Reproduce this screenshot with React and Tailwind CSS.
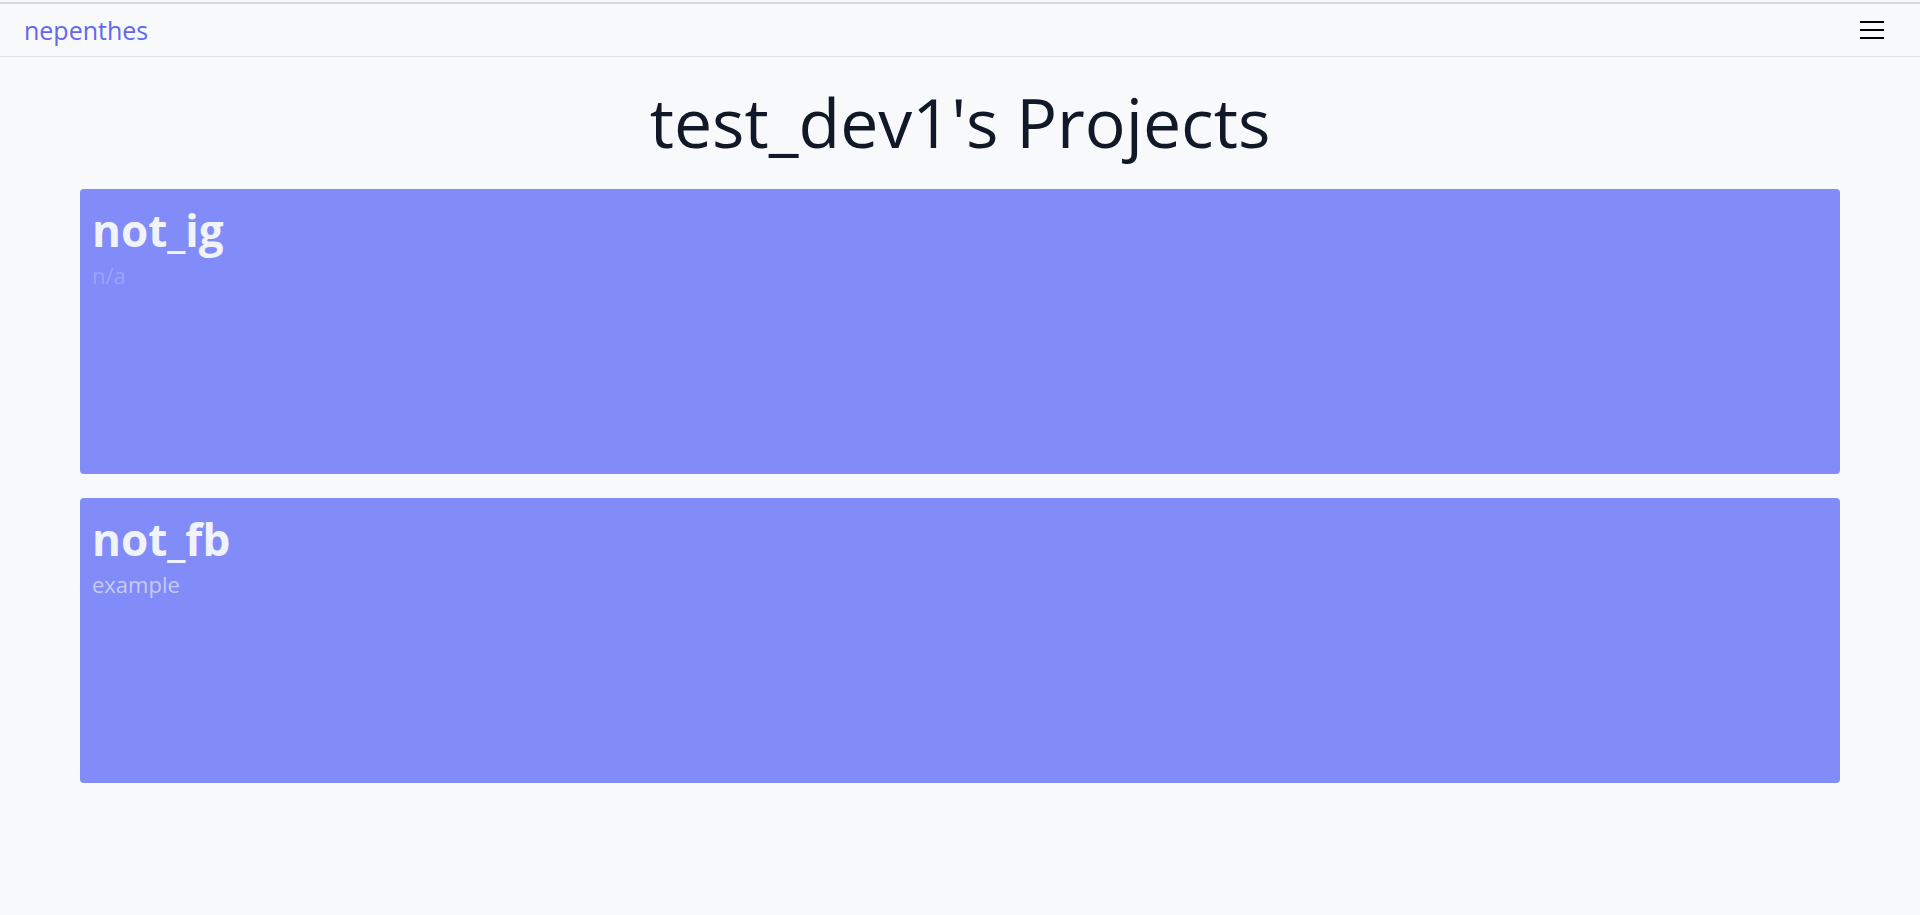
const projects = [
    { name: 'not_ig', description: 'n/a', faded: true },
    { name: 'not_fb', description: 'example', faded: false },
];

const App = () => {
    return (
        <div className="min-h-screen bg-[#f8f9fb] pt-[2px] font-['Open_Sans',sans-serif]">
            <nav className="flex h-[55px] items-center justify-between border-t-2 border-b border-t-[#d9d9dc] border-b-[#e3e4e8] px-6">
                <a href="#" className="text-[25px] leading-none text-[#6366f1]">nepenthes</a>
                <button className="flex h-6 w-6 items-center justify-center text-black mr-[12px]">
                    <svg width="24" height="18" viewBox="0 0 24 18" fill="none" stroke="currentColor" strokeWidth="1.3" shapeRendering="crispEdges">
                        <path d="M0 1h24M0 9h24M0 17h24" />
                    </svg>
                </button>
            </nav>

            <main className="mx-auto w-11/12">
                <h1 className="pt-[21px] pb-[23px] text-center text-[68px] leading-[88px] text-[#111827]">
                    test_dev1's Projects
                </h1>

                <div className="flex flex-col gap-6">
                    {projects.map((project) => (
                        <div key={project.name} className="h-[285px] rounded bg-[#818cf8] px-3 pt-[15px]">
                            <h2 className="text-[44px] font-bold leading-[52px] text-[#f1f3fb]">{project.name}</h2>
                            <p className={`text-[22px] leading-[38px] ${project.faded ? 'text-[#9aa4f9]' : 'text-[#c7cbf4]'}`}>
                                {project.description}
                            </p>
                        </div>
                    ))}
                </div>
            </main>
        </div>
    );
};

export default App;
